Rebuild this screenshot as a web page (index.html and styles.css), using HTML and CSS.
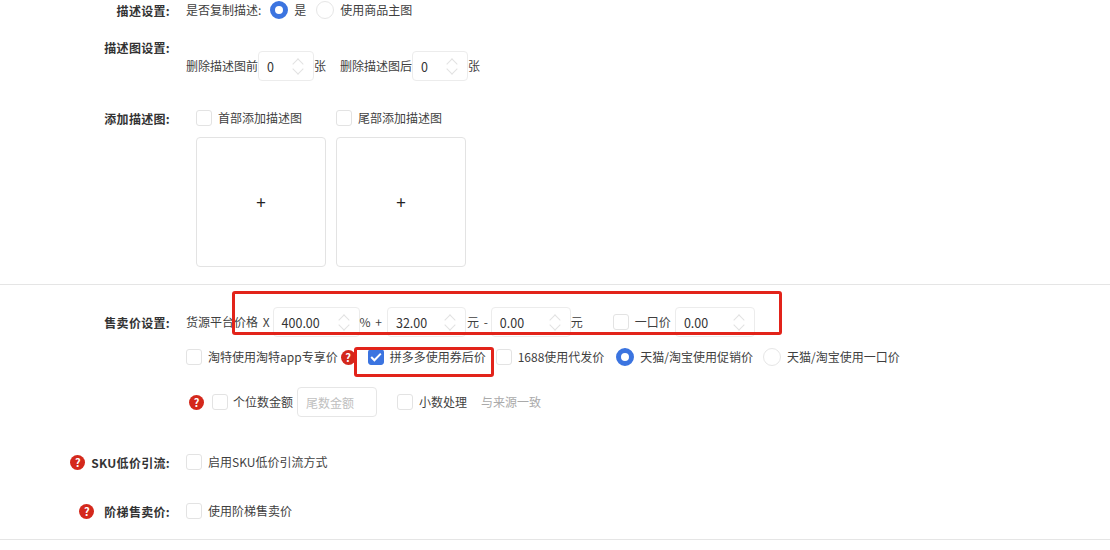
FILE: index.html
```html
<!DOCTYPE html>
<html lang="zh-CN">
<head>
    <meta charset="UTF-8">
    <title>售卖价设置</title>
    <link rel="stylesheet" href="styles.css">
</head>
<body>
    <div class="page">
        <div class="form-row row-desc">
            <div class="form-label">描述设置:</div>
            <div class="form-body">
                <span class="text">是否复制描述:</span>
                <span class="radio radio-on gap-first"></span>
                <span class="text gap-s">是</span>
                <span class="radio gap-m"></span>
                <span class="text gap-s">使用商品主图</span>
            </div>
        </div>

        <div class="form-row row-img">
            <div class="form-label label-top">描述图设置:</div>
            <div class="form-body body-low">
                <span class="text">删除描述图前</span>
                <span class="num-input w-56"><span>0</span><i class="spin"></i></span>
                <span class="text">张</span>
                <span class="text gap-l">删除描述图后</span>
                <span class="num-input w-56"><span>0</span><i class="spin"></i></span>
                <span class="text">张</span>
            </div>
        </div>

        <div class="form-row row-add">
            <div class="form-label">添加描述图:</div>
            <div class="add-grid">
                <div class="add-col">
                    <div class="check-line">
                        <span class="check"></span>
                        <span class="text">首部添加描述图</span>
                    </div>
                    <div class="upload">+</div>
                </div>
                <div class="add-col">
                    <div class="check-line">
                        <span class="check"></span>
                        <span class="text">尾部添加描述图</span>
                    </div>
                    <div class="upload">+</div>
                </div>
            </div>
        </div>

        <div class="divider"></div>

        <div class="form-row row-price">
            <div class="form-label">售卖价设置:</div>
            <div class="form-body">
                <span class="text">货源平台价格 X</span>
                <span class="num-input w-87 gap-xxs"><span>400.00</span><i class="spin"></i></span>
                <span class="text">% +</span>
                <span class="num-input w-79 gap-5"><span>32.00</span><i class="spin"></i></span>
                <span class="text gap-1">元 -</span>
                <span class="num-input w-80 gap-xxs"><span>0.00</span><i class="spin"></i></span>
                <span class="text">元</span>
                <span class="check gap-check"></span>
                <span class="text gap-s">一口价</span>
                <span class="num-input w-80 gap-xs"><span>0.00</span><i class="spin"></i></span>
            </div>
        </div>

        <div class="form-row row-opts">
            <div class="form-label"></div>
            <div class="form-body">
                <span class="check"></span>
                <span class="text gap-s">淘特使用淘特app专享价</span>
                <span class="help help-inline">?</span>
                <span class="check check-on gap-pdd">
                    <svg width="12" height="10" viewBox="0 0 12 10"><path d="M1.2 5l3.2 3.2L10.8 1.6" fill="none" stroke="#fff" stroke-width="2"/></svg>
                </span>
                <span class="text gap-s">拼多多使用券后价</span>
                <span class="check gap-c2"></span>
                <span class="text gap-s">1688使用代发价</span>
                <span class="radio radio-on gap-r1"></span>
                <span class="text gap-s">天猫/淘宝使用促销价</span>
                <span class="radio gap-m"></span>
                <span class="text gap-s">天猫/淘宝使用一口价</span>
            </div>
        </div>

        <div class="form-row row-tail">
            <div class="form-label"></div>
            <div class="form-body">
                <span class="help">?</span>
                <span class="check gap-8"></span>
                <span class="text gap-5">个位数金额</span>
                <span class="text-input">尾数金额</span>
                <span class="check gap-small"></span>
                <span class="text gap-s">小数处理</span>
                <span class="text muted gap-l">与来源一致</span>
            </div>
        </div>

        <div class="form-row row-sku">
            <div class="form-label"><span class="help">?</span><span>SKU低价引流:</span></div>
            <div class="form-body">
                <span class="check"></span>
                <span class="text gap-s">启用SKU低价引流方式</span>
            </div>
        </div>

        <div class="form-row row-step">
            <div class="form-label"><span class="help">?</span><span class="gap-help">阶梯售卖价:</span></div>
            <div class="form-body">
                <span class="check"></span>
                <span class="text gap-s">使用阶梯售卖价</span>
            </div>
        </div>

        <div class="divider divider-end"></div>

        <div class="mark mark-price"></div>
        <div class="mark mark-pdd"></div>
    </div>
</body>
</html>
```

FILE: styles.css
```css
* {
    margin: 0;
    padding: 0;
    box-sizing: border-box;
}

body {
    background: #fff;
    font-family: "Noto Sans CJK SC", "Noto Sans", sans-serif;
    font-size: 12px;
    color: #3f3f3f;
    overflow: hidden;
}

.page {
    position: relative;
    width: 1110px;
    height: 550px;
    overflow: hidden;
}

.form-row {
    display: flex;
    align-items: center;
}

.form-label {
    width: 170px;
    flex-shrink: 0;
    display: flex;
    justify-content: flex-end;
    align-items: center;
    font-weight: 700;
    letter-spacing: 0.3px;
    color: #333;
    white-space: nowrap;
}

.form-body {
    display: flex;
    align-items: center;
    margin-left: 16px;
    white-space: nowrap;
}

.text {
    line-height: 18px;
}

.muted {
    color: #aaa;
}

/* rows, top to bottom */
.row-desc {
    height: 20px;
}

.row-img {
    margin-top: 28px;
    height: 33px;
    align-items: flex-start;
}

.label-top {
    margin-top: -9px;
    line-height: 18px;
}

.body-low {
    margin-top: 3px;
}

.row-add {
    margin-top: 28px;
    align-items: flex-start;
}

.row-add .form-label {
    height: 18px;
}

.add-grid {
    display: flex;
    gap: 10px;
    margin-left: 26px;
}

.check-line {
    display: flex;
    align-items: center;
    gap: 6px;
    height: 18px;
}

.upload {
    display: flex;
    align-items: center;
    justify-content: center;
    width: 130px;
    height: 130px;
    margin-top: 10px;
    padding-bottom: 2px;
    border: 1px solid #e3e3e3;
    border-radius: 4px;
    font-size: 17px;
    color: #222;
}

.divider {
    height: 1px;
    margin-top: 17px;
    background: #e5e5e5;
}

.row-price {
    margin-top: 22px;
    height: 30px;
}

.row-price .text {
    word-spacing: 2px;
}

.row-opts {
    margin-top: 5px;
    height: 30px;
}

.row-tail {
    margin-top: 15px;
    height: 30px;
}

.row-tail .form-body {
    margin-left: 19px;
}

.row-sku {
    margin-top: 36px;
    height: 18px;
}

.row-step {
    margin-top: 31px;
    height: 18px;
}

.divider-end {
    margin-top: 19px;
}

/* controls */
.radio {
    display: inline-block;
    width: 18px;
    height: 18px;
    border: 1px solid #e6e6e6;
    border-radius: 50%;
    flex-shrink: 0;
}

.radio-on {
    border: 5px solid #3b74e0;
    background: #fff;
}

.check {
    display: inline-flex;
    align-items: center;
    justify-content: center;
    width: 16px;
    height: 16px;
    border: 1px solid #e3e3e3;
    border-radius: 3px;
    flex-shrink: 0;
}

.check-on {
    border-color: #3b74e0;
    background: #3b74e0;
}

.num-input {
    display: inline-flex;
    align-items: center;
    justify-content: space-between;
    height: 30px;
    padding: 0 10px 0 8px;
    border: 1px solid #ececec;
    border-radius: 4px;
    font-size: 12.5px;
    color: #333;
}

.w-56 { width: 56px; }
.w-79 { width: 79px; }
.w-80 { width: 80px; }
.w-87 { width: 87px; }

.spin {
    position: relative;
    display: block;
    width: 10px;
    height: 15px;
}

.spin::before,
.spin::after {
    content: "";
    position: absolute;
    left: 1px;
    width: 7px;
    height: 7px;
    border-left: 1px solid #e2e2e2;
    border-top: 1px solid #e2e2e2;
    transform: rotate(45deg);
}

.spin::before {
    top: 1px;
}

.spin::after {
    bottom: 1px;
    transform: rotate(225deg);
}

.text-input {
    display: inline-flex;
    align-items: center;
    width: 80px;
    height: 30px;
    margin-left: 4px;
    padding-left: 8px;
    border: 1px solid #e6e6e6;
    border-radius: 4px;
    color: #c0c0c0;
}

.help {
    display: inline-flex;
    align-items: center;
    justify-content: center;
    width: 15px;
    height: 15px;
    border-radius: 50%;
    background: #d4281c;
    color: #fff;
    font-size: 11px;
    font-weight: 700;
    letter-spacing: 0;
    flex-shrink: 0;
}

.row-sku .help {
    margin-right: 6px;
}

.help-inline {
    margin-left: 3px;
}

/* spacing helpers */
.gap-first { margin-left: 9px; }
.gap-1 { margin-left: 1px; }
.gap-xxs { margin-left: 3px; }
.gap-xs { margin-left: 4px; }
.gap-5 { margin-left: 5px; }
.gap-s { margin-left: 6px; }
.gap-8 { margin-left: 8px; }
.gap-m { margin-left: 10px; }
.gap-pdd { margin-left: 12px; }
.gap-r1 { margin-left: 12px; }
.gap-c2 { margin-left: 10px; }
.gap-l { margin-left: 14px; }
.gap-small { margin-left: 20px; }
.gap-check { margin-left: 30px; }
.gap-help { margin-left: 10px; }

/* red annotation boxes drawn over the form */
.mark {
    position: absolute;
    border: 3px solid #e2231a;
    border-radius: 3px;
}

.mark-price {
    left: 232px;
    top: 291px;
    width: 550px;
    height: 44px;
}

.mark-pdd {
    left: 354px;
    top: 347px;
    width: 140px;
    height: 30px;
}
```
